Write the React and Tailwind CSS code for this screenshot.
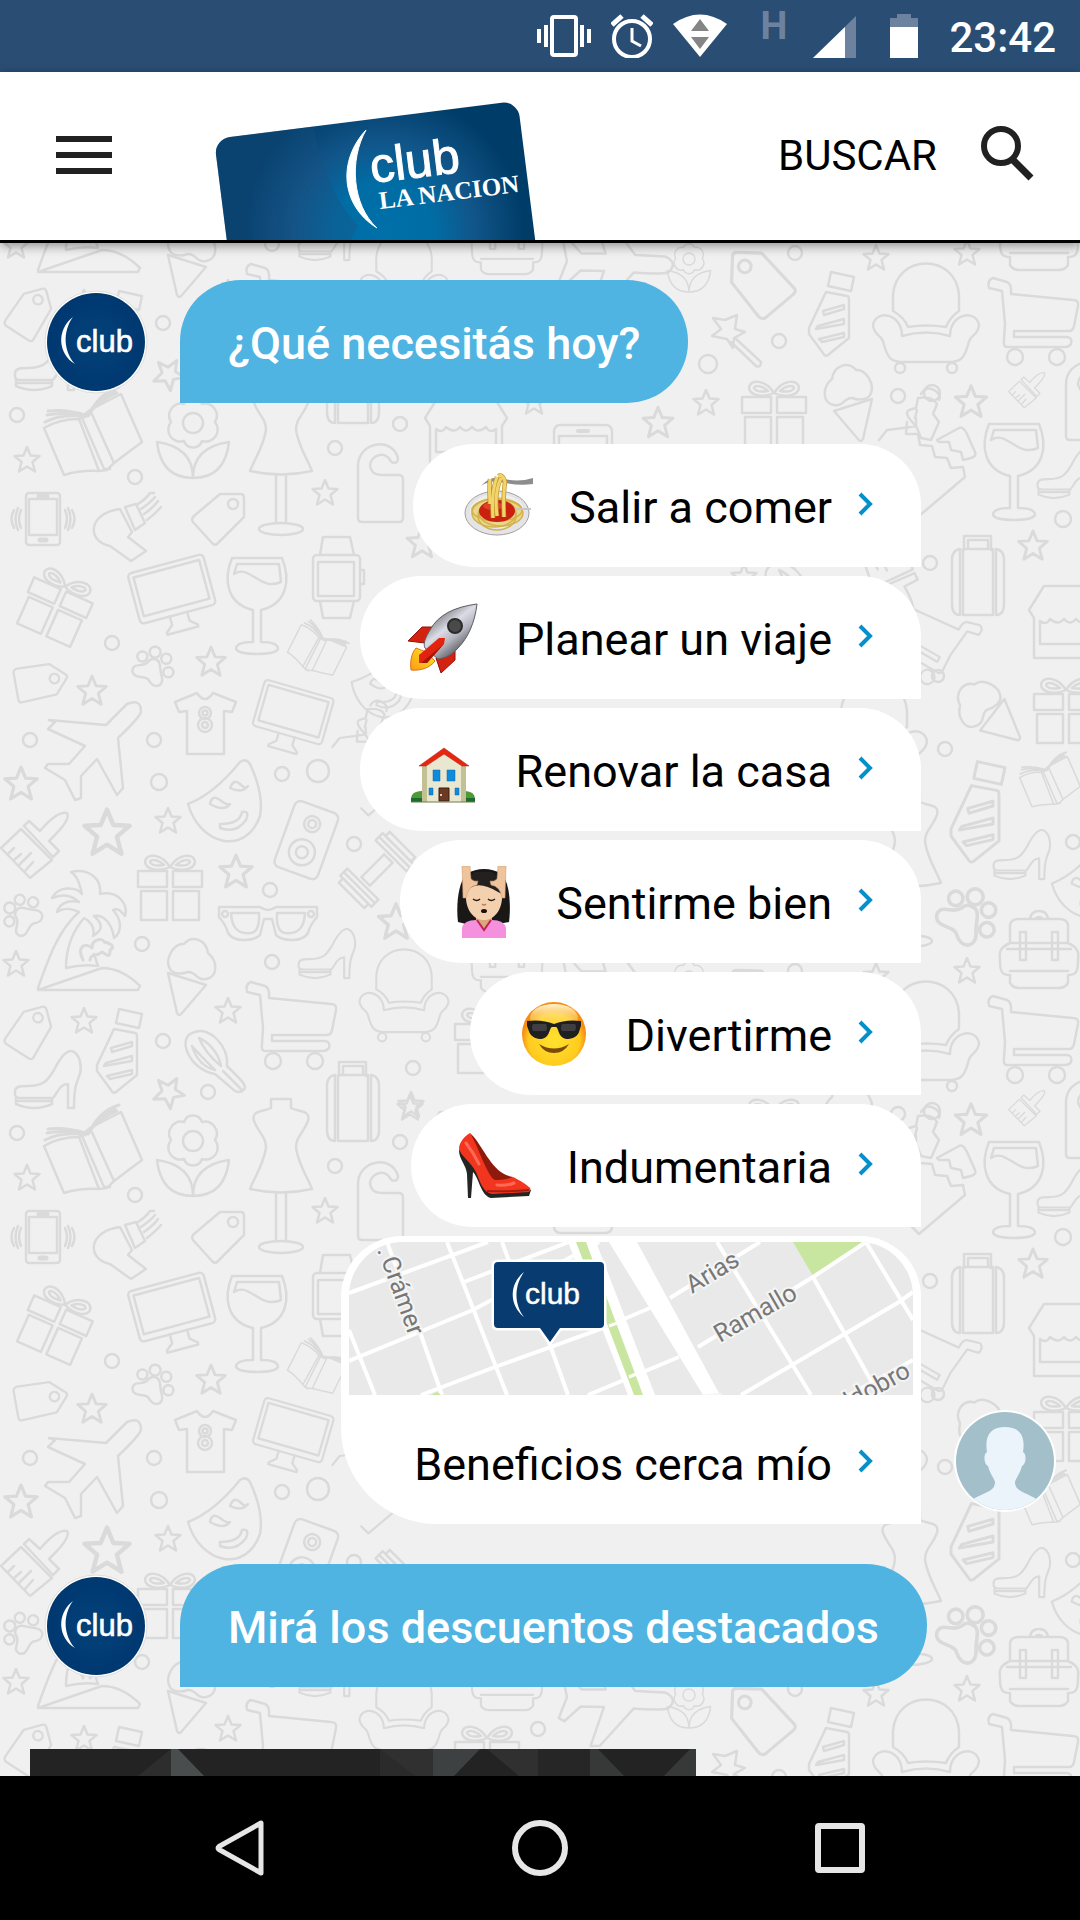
import { useState } from 'react'

const SANS = '"Liberation Sans", sans-serif'

// [shape, x, y, rotation, scale x, scale y]
const DOODLES = [
  ['book', 93, 435, 0, 1],
  ['book', 317, 650, 50, 0.6],
  ['book', 1050, 782, 0, 0.62],
  ['flower', 193, 423, 0, 1],
  ['flower', 689, 259, 0, 0.6],
  ['mannequin', 281, 458, 0, 1],
  ['mannequin', 910, 870, 0, 1],
  ['suitcase', 353, 384, 0, 1],
  ['suitcase', 978, 576, 0, 1],
  ['doortag', 380, 484, 0, 1],
  ['doortag', 1088, 402, 0, 1],
  ['phone', 43, 519, 0, 1],
  ['screen', 583, 455, 0, 1],
  ['plug', 120, 527, 0, 1],
  ['tag', 218, 519, 0, 1],
  ['tag', 35, 683, 32, 0.94],
  ['tag', 28, 317, -15, 0.94],
  ['tag', 763, 286, -88, 1.26],
  ['watch', 337, 577, 0, 1],
  ['gift', 57, 605, 24, 1],
  ['gift', 170, 887, 0, 1],
  ['gift', 774, 413, 0, 1],
  ['gift', 1066, 710, 0, 1],
  ['gift', 487, 322, 0, 1],
  ['monitor', 172, 590, -15, 1],
  ['monitor', 293, 713, 16, 0.92],
  ['glass', 257, 606, 0, 1],
  ['glass', 1014, 472, 0, 1],
  ['paw', 153, 667, 8, 1],
  ['paw', 23, 915, -62, 1],
  ['paw', 967, 917, 22, 1.45],
  ['shirt', 205, 723, 0, 1],
  ['plane', 93, 750, 0, 1],
  ['plane', 608, 262, 48, 1],
  ['mask', 226, 800, 0, 1],
  ['mask', 1086, 880, 0, 0.9],
  ['mask', 384, 682, 6, 0.85],
  ['brush', 35, 845, 0, 1],
  ['brush', 1027, 390, 0, 0.54],
  ['palm', 88, 930, 0, 1],
  ['speaker', 306, 841, 20, 1],
  ['dumbbell', 377, 870, -45, 1],
  ['glasses', 268, 923, 0, 1],
  ['heel', 327, 954, 0, 0.86],
  ['heel', 48, 362, 0, 1],
  ['heel', 1022, 855, 0, 0.86],
  ['heel', 1066, 474, 0, 0.86],
  ['icecream', 192, 977, 0, 1],
  ['icecream', 848, 403, 0, -1, 1],
  ['icecream', 987, 716, -35, -1, 1],
  ['cart', 291, 306, 0, 1],
  ['cart', 1033, 320, 0, 1],
  ['cart', 930, 640, 30, -0.9, 0.9],
  ['tie', 117, 333, 0, 1],
  ['tie', 829, 314, 0, 1],
  ['tie', 975, 812, 0, 1.2],
  ['whisk', 215, 344, 0, 1],
  ['chair', 404, 278, 0, 0.84],
  ['chair', 926, 319, 0, 1],
  ['chair', 874, 735, 0, 1],
  ['backpack', 1039, 949, 0, 1],
  ['backpack', 507, 957, 0, 0.9],
  ['store', 1070, 622, 0, 1],
  ['store', 466, 430, 0, 1],
  ['wand', 737, 340, 0, 1],
  ['bottle', 923, 450, 0, 1],
  ['bottle', 372, 756, 0, 0.9],
  ['whisk', 795, 594, 0, 1],
  ['brush', 893, 577, 110, 1],
  ['star', 27, 460, 0, 1],
  ['star', 325, 493, 0, 1],
  ['star', 211, 662, 0, 1.15],
  ['star', 92, 691, 0, 1.15],
  ['star', 21, 784, 0, 1.3],
  ['star', 107, 833, 0, 1.8],
  ['star', 168, 821, 0, 1],
  ['star', 236, 872, 0, 1.3],
  ['star', 16, 964, 0, 1],
  ['star', 84, 303, 0, 1],
  ['star', 228, 293, 0, 1],
  ['star', 169, 374, 30, 1.2],
  ['star', 422, 543, 0, 1.2],
  ['star', 411, 387, 0, 1],
  ['star', 396, 922, 0, 1.4],
  ['star', 658, 423, 0, 1.2],
  ['star', 706, 403, 0, 1],
  ['star', 876, 258, 0, 1],
  ['star', 967, 253, 0, 1],
  ['star', 971, 402, 0, 1.25],
  ['star', 1033, 546, 0, 1.15],
  ['star', 410, 1108, 0, 1],
  ['star', 744, 577, 0, 1],
  ['star', 534, 402, 0, 1],
]

// [x, y, radius]
const DOTS = [
  [17, 415, 7], [135, 477, 7], [335, 448, 7], [400, 424, 7], [112, 643, 7], [30, 740, 7],
  [154, 740, 7], [159, 782, 8], [282, 774, 7], [318, 771, 11], [354, 844, 7], [270, 890, 7],
  [142, 944, 7], [272, 962, 7], [163, 323, 7], [208, 374, 7], [413, 350, 7], [795, 253, 7],
  [779, 341, 7], [708, 364, 9], [898, 396, 7], [932, 393, 8], [930, 563, 7], [945, 749, 7],
  [1073, 842, 7], [538, 293, 7], [938, 676, 6], [1063, 519, 8],
]

function DoodleShapes() {
  return (
    <>
      <g id="star"><path d="M0-13 3.500-4.500 12.500-4 5.500 2 8 11.500 0 6.500-8 11.500-5.500 2-12.500-4-3.500-4.500Z" /></g>
      <g id="book">
        <path d="M-49-7-29 40Q-12 35 6 36L-14-16Q-34-16-49-7ZM-11-17 11 34 17 34M21 28-3-25 28-41 49 7ZM6 36 14 35 21 28M-3-25-14-16" />
        <path d="M-48-13Q-30-22-8-18-28-24-46-20M-45-24Q-25-26-5-19 2-32 24-42M-5-19Q4-38 22-44M-4-20Q6-42 26-48" strokeWidth="3" />
      </g>
      <g id="flower">
        <circle r="10" />
        <path d="M-9-19A9.500 9.500 0 0 1 9-19 12 12 0 0 1 22-1 12 12 0 0 1 9 18 9.500 9.500 0 0 1-9 18 12 12 0 0 1-22-1 12 12 0 0 1-9-19Z" />
        <path d="M0 55Q0 24-36 19-32 55 0 55 32 55 36 19 0 24 0 55" />
      </g>
      <g id="mannequin">
        <path d="M-10-77H10V-68C18-64 30-66 27-55 22-42 15-40 15-28 18-10 27 2 31 13Q0 20-31 13C-27 2-18-10-15-28-15-40-22-42-27-55-30-66-18-64-10-68ZM-5 17V65M5 17V65" />
        <ellipse cy="71" rx="22" ry="6" />
      </g>
      <g id="suitcase">
        <path d="M-14-26V-40H13V-26M-10-36H10V-27H-10ZM-15-27V39H15V-27ZM-18-27V39Q-26 39-26 28V-18Q-25-26-18-27ZM18-27V39Q26 39 26 28V-18Q25-26 18-27Z" />
      </g>
      <g id="doortag"><path d="M-22 34V-18C-22-42 12-48 18-26 18-20 12-20 10-24 4-34-10-28-10-18-8-10-4-9 4-9H19Q23-9 23-4V34Q23 38 19 38H-18Q-22 38-22 34Z" /></g>
      <g id="phone">
        <rect x="-17" y="-26" width="34" height="52" rx="3" /><rect x="-14" y="-20" width="28" height="36" />
        <path d="M-4-23H4M-3 21H3" strokeWidth="5" />
        <path d="M-22-9Q-26 0-22 9M-25-11Q-30 0-25 11M-29-9Q-34 0-29 9M22-9Q26 0 22 9M25-11Q30 0 25 11M29-9Q34 0 29 9" />
      </g>
      <g id="screen"><rect x="-29" y="-30" width="58" height="90" rx="6" /><rect x="-24" y="-19" width="48" height="66" /><path d="M-5-24H5" strokeWidth="4" /></g>
      <g id="plug"><path d="M-10 19C-34 14-32-14 0-18L12 5 8 10 26 24 11 34ZM5-20 16-23 25-4 15 3ZM18-23Q26-28 30-34L34-34M21-18Q30-24 35-30M24-13Q34-20 38-26M27-7Q36-14 41-20" /></g>
      <g id="tag"><path d="M2-25H23Q26-25 26-21V-2L-1 25Q-3 27-6 24L-25 3Q-27 0-24-3Z" /><circle cx="15" cy="-15" r="5" /></g>
      <g id="watch"><rect x="-24" y="-22" width="47" height="46" rx="4" /><rect x="-19" y="-15" width="36" height="34" /><path d="M-17-22-14-40H13L17-22M-17 24-14 41H13L17 24M23-7H27V7H23" /></g>
      <g id="gift">
        <path d="M-32-16H-3V0H-32ZM3-16H32V0H3ZM-29 4H-3V33H-29ZM3 4H29V33H3Z" />
        <path d="M0-20C-8-33-24-35-25-25-24-17-10-15 0-20 8-33 24-35 25-25 24-17 10-15 0-20ZM-6-22C-12-28-20-28-20-25-18-21-12-21-6-22ZM6-22C12-28 20-28 20-25 18-21 12-21 6-22Z" />
      </g>
      <g id="monitor"><rect x="-39" y="-27" width="78" height="52" rx="4" /><rect x="-34" y="-22" width="68" height="40" /><path d="M-9 25V34L-16 40V42H16V40L9 34V25" /></g>
      <g id="glass"><path d="M-25-48H25C34-26 30-2 4 4V36Q21 36 21 43 18 48 0 48T-21 43Q-21 36-4 36V4C-30-2-34-26-25-48ZM-20-42H22L24-24C10-18 4-26-8-32-14-36-20-34-23-32Z" /></g>
      <g id="paw">
        <path d="M0-8C8-8 6 0 10 8 14 18 4 22-2 14-6 8-18 16-20 6-20-2-10 2-6-4-4-8-2-8 0-8Z" />
        <circle cx="-12" cy="-9" r="5" /><circle cx="0" cy="-15" r="5.500" /><circle cx="12" cy="-10" r="5" /><circle cx="16" cy="3" r="5" />
      </g>
      <g id="shirt"><path d="M-8-30-30-21-26-11-18-12V31H19V-12L27-11 31-21 8-30Q0-18-8-30Z" /><circle cy="-10" r="6" /><circle cy="2" r="7" /><circle cy="-10" r="2.500" /><circle cy="2" r="3" /></g>
      <g id="plane"><path d="M-44-30 13-25 34-46Q48-52 48-38 46-32 25-12L30 38 24 45 4 9-12 26V48L-18 50-28 30-48 18-45 14H-24L-8-4-45-21-38-28Z" /></g>
      <g id="mask"><path d="M-38 4Q-12-6 14-38 20-42 24-36 38-6 34 16C20 56-26 46-38 4ZM-16 4Q-14-6-6 0T4 4Q-2 12-16 4ZM4-12Q8-22 14-16T22-14Q16-6 4-12ZM-6 24Q14 24 16 12 24 10 20 20 10 34-6 28Z" /></g>
      <g id="brush"><path d="M5-14Q22-34 32-32 36-26 18-8L14-4 24 6 18 12-11-19-6-24ZM-14-16 17 15-5 33-34 3ZM-27 9-21 3M-21 15-14 9M-16 20-4 8M-10 26-2 17" /></g>
      <g id="palm">
        <path d="M-50 58C-40 30-30 0-9-18-22-24-28-20-31-18-28-28-18-30-9-28-20-38-30-34-36-32-30-44-12-44-6-36-10-54-14-56-17-58 0-62 14-52 12-36 32-40 40-24 37-14 32-20 30-22 25-20 36-8 32 4 26 8 24-6 16-16 6-14 20-2 8 4 5 6 8-4 0-10-4-12-16 2-22 20-22 38Q-6 34 10 36L6 24M14 38C32 38 44 48 52 56L50 60H-50Z" />
        <path d="M-5 30C-12 16-2 12 4 18 4 8 16 8 16 12 26 14 26 18 22 20 22 28 20 26 14 22 6 28 4 22 2 30" strokeWidth="3" />
      </g>
      <g id="speaker"><rect x="-23" y="-36" width="46" height="70" rx="6" /><circle cy="-18" r="8" /><circle cy="-18" r="4" /><circle cy="12" r="13" /><circle cy="12" r="6" /></g>
      <g id="dumbbell"><path d="M-16-6H16V6H-16ZM-30-22H-20V22H-30ZM-36-18H-30V18H-36ZM20-22H30V22H20ZM30-18H36V18H30ZM-25-22V22M25-22V22" /></g>
      <g id="glasses"><path d="M-49-16H-8Q0-10 8-16H49V-6Q42 2 40 10C34 20 14 18 8 12L4-4H-4L-8 12C-14 18-34 20-40 10Q-42 2-49-6ZM-37-10H-9Q-8 10-18 10-36 12-37-10ZM37-10H9Q8 10 18 10 36 12 37-10Z" /><circle cx="-43" cy="-9" r="3" /><circle cx="43" cy="-9" r="3" /></g>
      <g id="heel"><path d="M-33 14C-34 6-28 6-20 6-4 6 0 0 6-10 12-22 18-30 24-29 32-26 34-14 32-6 28 4 26 8 26 28H20V4C12 4 10 12 5 18L-28 18Q-33 18-33 14ZM-32 18V24Q-14 32 4 24V18M-30 21H4" /></g>
      <g id="icecream"><path d="M-24-4-15 36Q-13 40-10 36L14 8ZM-22-8C-28-18-18-34-8-33 0-42 14-38 16-24 26-16 26 0 14 2 4 4 4-6-4-5-12-2-20-4-22-8Z" /></g>
      <g id="cart"><path d="M-31-29-44-32Q-46-40-40-42L-26-38Q-21-36-22-26L40-20Q46-20 45-14L41 6Q40 11 36 11H-19V17H34Q40 18 38 24 36 27 32 27H-26Q-30 27-29 20L-28 4Z" /><circle cx="-18" cy="37" r="8" /><circle cx="24" cy="37" r="8" /></g>
      <g id="tie"><path d="M2-42 25-37 22-23-1-28ZM-3-22 18-18Q20-18 20-14V24L-1 41Q-4 43-6 39L-20 20V14ZM-6-3 15-9V-5L-5 1ZM-11 12 15 5V10L-13 15ZM-10 25 15 19V23L-7 28Z" /></g>
      <g id="whisk"><path d="M-20-30C-40-26-26 8 0 12L20 29Q26 32 30 26 30 22 24 16L12 4C14-16-6-36-20-30ZM-23-16C-18 0-8 6 0 8-10-2-18-10-23-16ZM-16-24C-6-20 4-8 6 4-4-4-12-14-16-24ZM8 9 26 27" /></g>
      <g id="chair"><path d="M-33-8V-24C-30-66 30-66 33-24V-8Q24-2 20 8-0 5-18 8-22-2-33-8ZM-24 17Q0 10 24 17C24-6 50-10 53 6 52 18 44 14 42 26 38 40 34 42 26 43H-26C-34 42-38 40-42 26-44 14-52 18-53 6-50-10-24-6-24 17Z" /><circle cx="-26" cy="49" r="5" /><circle cx="26" cy="49" r="5" /></g>
      <g id="backpack"><path d="M-29-6V-24Q-28-30-20-30H20Q28-30 29-24V-6ZM-9-30Q-8-38 0-38T9-30M-4-30Q0-34 4-30M-29-6C-42 0-39 6-39 12-39 24-36 26-29 26V34Q-26 39-20 39H20Q26 39 29 34V26C36 26 39 24 39 12 39 6 42 0 29-6M-29 22H29M-32 0H32M-19-17H-13V11H-19ZM13-17H19V11H13Z" /></g>
      <g id="store"><path d="M-26-36H26L41-12 36-4V36H-36V-4L-41-12ZM-30-1Q-24 4-20-3-12 4-6-3 0 4 6-3 12 4 20-3 24 4 30-1V22H-30Z" /></g>
      <g id="wand"><path d="M0-25-2-11 8-8-3-2-4 8-10-1-25-4-16-11-24-22-12-20ZM-2-2 24 22Q24 28 19 26L-6 2" /></g>
      <g id="bottle"><path d="M-6-40-8-32H-7L-7-24-20-22-36-20-44-10M-16-28-17-16-5-16-3-5 9-4 12 7 24 8 28 18 40 17 42 27-4 66-12 58M-6-22-14-32Q-18-38-14-40L-7-42-5-52Q10-54 14-46L10-36 16-28 8-10-2-12ZM-2-56Q4-66 14-58 18-54 16-50M14-10 36-22Q40-24 44-16L52 2Q54 6 48 8L40 10 38 2 28 0 26-8 16-8Z" /></g>
    </>
  )
}

function Wallpaper() {
  return (
    <svg className="absolute inset-0 w-full h-full" aria-hidden="true">
      <defs>
        <DoodleShapes />
        <g id="doodles" fill="none" stroke="#dadada" strokeWidth="2.500" strokeLinejoin="round" strokeLinecap="round">
          {DOODLES.map(([shape, x, y, r, sx, sy], i) => (
            <use key={i} href={`#${shape}`} transform={`translate(${x} ${y}) rotate(${r}) scale(${sx} ${sy || sx})`} />
          ))}
          {DOTS.map(([x, y, r], i) => <circle key={i} cx={x} cy={y} r={r} />)}
        </g>
        <pattern id="tile" width="1080" height="718" patternUnits="userSpaceOnUse">
          <use href="#doodles" y="-243" />
          <use href="#doodles" y="-961" />
          <use href="#doodles" y="475" />
        </pattern>
      </defs>
      <rect width="100%" height="100%" fill="url(#tile)" />
    </svg>
  )
}

function StatusBar() {
  return (
    <div className="h-[72px] shrink-0 bg-[#2a4d73] flex items-center justify-end pr-6 text-white">
      <svg className="w-[54px] h-11 mr-5" viewBox="0 0 54 44" fill="none" stroke="#fff">
        <rect x="15" y="3" width="24" height="38" rx="2" strokeWidth="4" />
        <path d="M9 11V33M45 11V33M2 15V29M52 15V29" strokeWidth="4" />
      </svg>
      <svg className="w-[42px] h-11 mr-5" viewBox="0 0 42 44" fill="none" stroke="#fff">
        <circle cx="21" cy="25" r="18" strokeWidth="4" />
        <path d="M1 11 11 2M41 11 31 2" strokeWidth="5" />
        <path d="M21 14V27L30 32" strokeWidth="3" />
      </svg>
      <svg className="w-[54px] h-11 mr-[34px]" viewBox="0 0 54 44">
        <path d="M0 10Q27-9 54 10L27 43Z" fill="#fff" />
        <path d="M27 5 36 17H18ZM18 23H36L27 35Z" fill="#858585" />
      </svg>
      <span className="self-start pt-[6px] text-[38px] leading-[40px] font-bold text-[#6c829e]">H</span>
      <svg className="w-11 h-11 ml-[26px] mr-[33px]" viewBox="0 0 44 44">
        <path d="M43 2V44H0Z" fill="#6c829e" />
        <path d="M32 13V44H0Z" fill="#fff" />
      </svg>
      <svg className="w-7 h-11 mr-[31px]" viewBox="0 0 28 44">
        <path d="M0 13V4H7V0H21V4H28V13Z" fill="#6c829e" />
        <path d="M0 13H28V44H0Z" fill="#fff" />
      </svg>
      <span className="pt-1 text-[42px] leading-[48px] font-medium">23:42</span>
    </div>
  )
}

function CardLogo() {
  return (
    <svg className="w-[324px] h-[140px]" viewBox="214 100 324 140" role="img" aria-label="Club La Nacion">
      <defs>
        <radialGradient id="card" gradientUnits="userSpaceOnUse" cx="384" cy="232" r="165">
          <stop offset="0" stopColor="#0070a8" />
          <stop offset="0.3" stopColor="#006da5" />
          <stop offset="0.55" stopColor="#115589" />
          <stop offset="0.85" stopColor="#003c68" />
        </radialGradient>
        <clipPath id="cardClip"><rect width="306" height="210" rx="16" transform="translate(214 139) rotate(-7.200)" /></clipPath>
      </defs>
      <g clipPath="url(#cardClip)">
        <path d="M200 90H540V240H200Z" fill="url(#card)" />
        <path d="M311 90Q312 175 358 226L340 260H200V90Z" fill="#1c4f80" opacity="0.35" />
      </g>
      <path d="M366 130C338 160 340 205 377 228 352 205 349 160 366 130Z" fill="#fff" stroke="#fff" />
      <text transform="translate(372 183) rotate(-7)" fontFamily={SANS} fontSize="49" fill="#fff" stroke="#fff">club</text>
      <text transform="translate(380 209) rotate(-7)" fontFamily='"Liberation Serif", serif' fontWeight="700" fontSize="25" fill="#fff">LA NACION</text>
    </svg>
  )
}

function Header() {
  return (
    <header className="relative z-10 shrink-0 flex items-end justify-between bg-white border-b-[3px] border-black h-[171px] pl-14 pr-11 shadow-[0_3px_10px_rgba(0,0,0,0.4)]">
      <div className="flex items-end gap-[102px]">
        <button aria-label="Menú" className="mb-[66px] flex flex-col gap-[10px]">
          <span className="w-14 h-[6px] bg-[#212121]" />
          <span className="w-14 h-[6px] bg-[#212121]" />
          <span className="w-14 h-[6px] bg-[#212121]" />
        </button>
        <a href="#inicio"><CardLogo /></a>
      </div>
      <button className="mb-14 flex items-center gap-[43px] text-[42px] leading-[56px] text-black">
        <span className="pt-1">BUSCAR</span>
        <svg className="w-14 h-14" viewBox="0 0 56 56" fill="none" stroke="#212121">
          <circle cx="21" cy="20" r="17" strokeWidth="6" />
          <path d="M32 33 51 52" strokeWidth="7" />
        </svg>
      </button>
    </header>
  )
}

function ClubAvatar() {
  return (
    <svg className="w-[104px] h-[104px] shrink-0" viewBox="0 0 104 104" role="img" aria-label="club">
      <defs>
        <radialGradient id="club"><stop offset="0" stopColor="#04427a" /><stop offset="1" stopColor="#003870" /></radialGradient>
      </defs>
      <circle cx="52" cy="52" r="51" fill="#fff" stroke="#ddd" />
      <circle cx="52" cy="52" r="49" fill="url(#club)" />
      <path d="M29 27C12 40 14 64 31 74 20 62 18 42 29 27Z" fill="#fff" />
      <text x="32" y="62" fontFamily={SANS} fontSize="31" fill="#fff" stroke="#fff" strokeWidth="0.600">club</text>
    </svg>
  )
}

function Question({ children }) {
  return (
    <div className="flex items-center gap-8 pl-11">
      <ClubAvatar />
      <h2 className="rounded-[61px] rounded-bl-none bg-[#4fb4e1] px-12 pt-9 pb-8 text-[45px] leading-[55px] font-medium text-white">{children}</h2>
    </div>
  )
}

function Chevron() {
  return (
    <svg className="w-4 h-6 mb-[3px]" viewBox="0 0 16 24" fill="none" stroke="#0490ca" strokeWidth="4"><path d="M2 2 12 12 2 22" /></svg>
  )
}

function Pasta() {
  return (
    <>
      <ellipse cx="36" cy="43" rx="32" ry="22" fill="#e4e4e6" stroke="#a0a0a0" />
      <ellipse cx="36" cy="41" rx="27" ry="17" fill="#efefef" />
      <ellipse cx="36" cy="42" rx="26" ry="15" fill="#ead789" />
      <g fill="none" stroke="#d2b24e" strokeWidth="1.500">
        <ellipse cx="33" cy="43" rx="22" ry="14" /><ellipse cx="40" cy="43" rx="22" ry="13" /><ellipse cx="36" cy="46" rx="19" ry="14" /><ellipse cx="36" cy="40" rx="25" ry="11" />
      </g>
      <ellipse cx="36" cy="41" rx="18" ry="11" fill="#c9200f" />
      <ellipse cx="32" cy="36" rx="10" ry="4" fill="#dd4329" />
      <path d="M20 16Q28 6 40 8 56 13 72 8V14Q56 16 40 12 28 10 20 16Z" fill="#8d8d8d" />
      <path d="M29 34Q28 16 29 9M32 48Q30 22 36 7M36 46Q33 22 40 8M43 47Q42 26 44 12Q42 4 37 6" fill="none" stroke="#bf962d" strokeWidth="4.500" />
      <path d="M29 34Q28 16 29 9M32 48Q30 22 36 7M36 46Q33 22 40 8M43 47Q42 26 44 12Q42 4 37 6" fill="none" stroke="#f1d56b" strokeWidth="3" />
      <path d="M54 38H70V40H54Z" fill="#c7c7c7" />
    </>
  )
}

function Rocket() {
  return (
    <>
      <defs>
        <linearGradient id="hull" x1="0.300" y1="0.200" x2="0.750" y2="0.800"><stop offset="0" stopColor="#8d8d94" /><stop offset="0.350" stopColor="#dcdce6" /><stop offset="0.650" stopColor="#b3b3bd" /><stop offset="1" stopColor="#5d5d64" /></linearGradient>
        <linearGradient id="flame" x1="1" y1="0" x2="0" y2="1"><stop offset="0" stopColor="#ffef20" /><stop offset="1" stopColor="#fb9a16" /></linearGradient>
      </defs>
      <path d="M8 46C3 52 2 60 3 68 12 69 22 66 27 59L18 50Z" fill="url(#flame)" stroke="#d9761a" />
      <path d="M0 39 14 25H25L17 41ZM28 56 47 47V58L33 71Z" fill="#d42210" stroke="#8e1509" />
      <path d="M69 2C46 5 30 13 22 28 17 36 15 42 17 46L30 57C38 56 44 53 50 46 60 36 67 20 69 2Z" fill="url(#hull)" stroke="#5c5c62" />
      <circle cx="47" cy="24" r="7" fill="#4a4a4a" stroke="#2b2b2b" strokeWidth="2" />
      <path d="M37 36H31L11 53V61H19L36 42Z" fill="#e2230f" />
      <path d="M36 42 19 61H13Z" fill="#a3160a" />
    </>
  )
}

function House() {
  return (
    <>
      <path d="M3 67Q2 57 14 57V68H3ZM67 67Q68 57 56 57V68H67Z" fill="#4f9a37" />
      <path d="M3 64H14V68H3ZM56 64H67V68H56Z" fill="#1d6b2e" />
      <path d="M14 30 36 16 58 30V68H14Z" fill="#e9e7cf" />
      <path d="M14 32H19V68H14ZM53 32H58V68H53Z" fill="#c3c094" />
      <path d="M36 14 61 32H54L36 20 18 32H11Z" fill="#e72612" stroke="#b31c0c" strokeWidth="0.500" />
      <path d="M25 36H32V47H25ZM39 36H47V47H39ZM21 54H25V61H21ZM47 54H51V61H47Z" fill="#0d8bdc" stroke="#2163a0" strokeWidth="0.500" />
      <path d="M31 54H41V67H31Z" fill="#6c3a22" stroke="#3c1c0e" /><circle cx="33" cy="61" r="1" fill="#fff" />
      <path d="M3 68H67" stroke="#6b7b4e" />
    </>
  )
}

function Massage() {
  return (
    <>
      <path d="M10 56C8 40 10 18 18 8Q36-2 54 8C62 18 63 40 61 56L50 58H18Z" fill="#1a1817" />
      <path d="M28 52H44V62H28Z" fill="#d9a97c" />
      <path d="M14 72V62Q16 54 28 54L36 64 44 54Q56 54 58 62V72Z" fill="#f590df" />
      <path d="M29 54 36 64 43 54" fill="none" stroke="#c41f56" strokeWidth="2" />
      <path d="M18 28Q20 14 36 15 52 14 54 28C55 44 46 54 36 54S17 44 18 28Z" fill="#f4d1ae" />
      <path d="M22 22Q32 15 50 26L54 28V16L44 6H26L18 20Z" fill="#24201f" />
      <path d="M14 0H22L23 13Q26 16 30 15L29 19Q20 20 18 32H15ZM58 0H50L49 13Q46 16 42 15L43 19Q52 20 54 32H57Z" fill="#efc39c" stroke="#c89468" strokeWidth="0.500" />
      <path d="M25 33Q29 36 32 33M40 33Q43 36 47 33" fill="none" stroke="#2c1b12" strokeWidth="1.500" />
      <path d="M34 38Q36 40 38 38" fill="none" stroke="#bd8257" strokeWidth="1.500" />
      <ellipse cx="36" cy="45" rx="3" ry="2" fill="#1d0f0b" />
    </>
  )
}

function Cool() {
  return (
    <>
      <defs>
        <radialGradient id="cool" cy="0.600"><stop offset="0" stopColor="#ffe22e" /><stop offset="0.800" stopColor="#fecb1e" /><stop offset="1" stopColor="#f68d14" /></radialGradient>
        <linearGradient id="shine" x2="0" y2="1"><stop offset="0" stopColor="#fff3cf" /><stop offset="1" stopColor="#ffd630" stopOpacity="0" /></linearGradient>
      </defs>
      <circle cx="36" cy="36" r="32" fill="url(#cool)" />
      <ellipse cx="36" cy="20" rx="24" ry="14" fill="url(#shine)" />
      <path d="M9 23Q24 21 36 26 48 21 63 23V28C61 32 62 40 50 41 40 41 41 30 38 29H34C31 30 32 41 22 41 11 40 11 32 9 28Z" fill="#1f1f21" />
      <path d="M15 26H28Q30 30 28 33H15Q13 29 15 26ZM44 26H57Q59 29 57 33H44Q42 30 44 26Z" fill="#3f3f41" />
      <path d="M21 46Q36 55 51 46 46 55 36 55T21 46Z" fill="#7d4a0a" />
    </>
  )
}

function Heel() {
  return (
    <>
      <path d="M0 20C0 30 7 34 8 44L9 68H12L14 42C20 48 22 66 32 68L70 66 72 60 40 56 8 18Z" fill="#242424" />
      <path d="M11 3 14 6C26 20 34 44 54 47L44 54H32Z" fill="#8f1a0c" />
      <path d="M11 3C6 6 0 12 0 19 2 26 12 32 17 42 22 54 24 62 33 64L70 62Q73 59 70 57C64 52 60 50 54 47 46 50 40 50 36 50 28 46 20 18 11 3Z" fill="#f2351f" />
      <path d="M7 13Q14 22 20 34M38 55Q48 56 55 53" fill="none" stroke="#ff6a55" strokeWidth="3" strokeLinecap="round" />
      <path d="M28 61Q46 62 70 60" fill="none" stroke="#a81c0e" strokeWidth="2" />
    </>
  )
}

const OPTIONS = [
  { label: 'Salir a comer', Emoji: Pasta },
  { label: 'Planear un viaje', Emoji: Rocket },
  { label: 'Renovar la casa', Emoji: House },
  { label: 'Sentirme bien', Emoji: Massage },
  { label: 'Divertirme', Emoji: Cool },
  { label: 'Indumentaria', Emoji: Heel },
]

function Option({ label, Emoji, onClick }) {
  return (
    <button onClick={onClick} className="h-[123px] flex items-center rounded-[61px] rounded-br-none bg-white pl-12 pr-[47px] text-[45px] leading-[55px] text-black">
      <svg className="w-[72px] h-[72px] mr-9" viewBox="0 0 72 72" aria-hidden="true"><Emoji /></svg>
      <span className="mr-[26px] pt-1">{label}</span>
      <Chevron />
    </button>
  )
}

function MapPreview() {
  return (
    <svg className="block w-full h-[153px] rounded-t-[54px]" viewBox="0 0 564 153" preserveAspectRatio="xMidYMid slice">
      <path d="M0 0H564V153H0Z" fill="#e9e9e9" />
      <path d="M444 0H514L464 34Z" fill="#c9e6a1" />
      <g fill="none" stroke="#fff" strokeWidth="4">
        <path d="M38 0 72 93 93 153M98 0 158 153M153 0 175 60 200 100 219 153M0 88 26 153" />
        <path d="M0 51 139 0M0 119 124 68 250 0M72 153 146 125 249 88 301 66M239 153 330 115M115 40 220 0" />
        <path d="M321 56 411 0M349 105 464 35 517 0M392 153 443 123 550 60 564 50M368 0 462 153M464 35 530 153M517 0 564 78M500 153 564 118" />
      </g>
      <path d="M219 0H247L306 153H279ZM260 0H288L371 153H354Z" fill="#fff" />
      <path d="M227 0H237L294 153H285ZM82 153 88 150 92 153Z" fill="#c9e6a1" />
      <path d="M260 84 276 78M280 135 292 130" stroke="#fff" strokeWidth="3" />
      <g fontSize="25" fill="#777" stroke="#f4f4f4" strokeWidth="4" paintOrder="stroke">
        <text transform="translate(32 18) rotate(70)">Crámer</text>
        <text transform="translate(28 8) rotate(70)">.</text>
        <text transform="translate(343 52) rotate(-31)">Arias</text>
        <text transform="translate(371 101) rotate(-30)">Ramallo</text>
        <text transform="translate(501 168) rotate(-29)">ldobro</text>
        <text transform="translate(358 172) rotate(-5)">T</text>
      </g>
      <path d="M149 20H251Q255 20 255 24V82Q255 86 251 86H211L201 100 191 86H149Q145 86 145 82V24Q145 20 149 20Z" fill="#083c70" stroke="#fff" strokeWidth="5" paintOrder="stroke" />
      <path d="M175 30C160 42 160 63 175 75 165 62 165 44 175 30Z" fill="#fff" />
      <text x="176" y="62" fontFamily={SANS} fontSize="30" fill="#fff" stroke="#fff" strokeWidth="0.500">club</text>
    </svg>
  )
}

function UserAvatar() {
  return (
    <svg className="w-[102px] h-[102px] mb-3 shrink-0" viewBox="0 0 102 102" role="img" aria-label="Usuario">
      <defs><clipPath id="user"><circle cx="51" cy="51" r="49" /></clipPath></defs>
      <circle cx="51" cy="51" r="51" fill="#fff" />
      <circle cx="51" cy="51" r="49" fill="#a3bfca" />
      <path clipPath="url(#user)" d="M33 42C30 24 38 17 51 17S72 24 69 42C73 44 72 54 68 56 66 64 62 68 61 72 61 82 72 82 84 90V102H18V90C30 82 41 82 41 72 40 68 36 64 34 56 30 54 29 44 33 42Z" fill="#ebf4fb" />
    </svg>
  )
}

function PromoCard() {
  return (
    <a href="#destacados" aria-label="Descuento destacado" className="mt-[62px] ml-[30px] block w-[666px] max-w-full h-[360px] shrink-0 bg-[#232323]">
      <svg className="w-full h-full" viewBox="0 0 666 360" preserveAspectRatio="xMinYMin slice" aria-hidden="true">
        <path d="M134 0H141L108 27H141V0Z" fill="#2d2d2d" />
        <path d="M141 0H148L174 27H141Z" fill="#4a4d4d" />
        <path d="M350 0H403V60H350Z" fill="#2b2b2b" />
        <path d="M403 0H450L424 27H403Z" fill="#3d4141" />
        <path d="M457 0H508V27H489ZM350 0 385 27H403V0Z" fill="#303030" />
        <path d="M560 0H568L594 27H560ZM660 0H666V27H634Z" fill="#373939" />
        <path d="M508 0H560V27H508Z" fill="#262626" />
      </svg>
    </a>
  )
}

function NavBar() {
  return (
    <nav className="h-36 shrink-0 bg-black grid grid-cols-3 items-center justify-items-center px-[90px]">
      <button aria-label="Atrás">
        <svg className="w-[60px] h-[60px]" viewBox="0 0 60 60" fill="none" stroke="#e6e6e6" strokeWidth="5" strokeLinejoin="round"><path d="M51 5V55L9 31.500Q7 30 9 28.500Z" /></svg>
      </button>
      <button aria-label="Inicio">
        <svg className="w-[60px] h-[60px]" viewBox="0 0 60 60" fill="none" stroke="#e6e6e6" strokeWidth="6"><circle cx="30" cy="30" r="25" /></svg>
      </button>
      <button aria-label="Recientes">
        <svg className="w-[60px] h-[60px]" viewBox="0 0 60 60" fill="none" stroke="#e6e6e6" strokeWidth="6"><rect x="8" y="8" width="44" height="44" rx="1" /></svg>
      </button>
    </nav>
  )
}

export default function App() {
  const [, setSelected] = useState('')

  return (
    <div className="h-screen flex flex-col bg-[#f0f0f0] font-['Roboto',sans-serif]">
      <StatusBar />
      <Header />
      <main className="relative flex-1 min-h-0 overflow-hidden">
        <Wallpaper />
        <div className="relative flex flex-col pt-[37px]">
          <Question>¿Qué necesitás hoy?</Question>
          <div className="mt-[41px] mb-10 pr-6 flex items-end justify-end gap-[33px]">
            <div className="flex flex-col items-end gap-[9px]">
              {OPTIONS.map((o) => (
                <Option key={o.label} {...o} onClick={() => setSelected(o.label)} />
              ))}
              <button onClick={() => setSelected('Beneficios cerca mío')} className="w-[580px] rounded-t-[61px] rounded-bl-[96px] bg-white px-2 pt-[6px] text-[45px] leading-[55px] text-black">
                <MapPreview />
                <span className="h-[129px] flex items-center justify-end pr-[39px] pt-[6px]">
                  <span className="mr-[26px] pt-1">Beneficios cerca mío</span>
                  <Chevron />
                </span>
              </button>
            </div>
            <UserAvatar />
          </div>
          <Question>Mirá los descuentos destacados</Question>
          <PromoCard />
        </div>
      </main>
      <NavBar />
    </div>
  )
}
